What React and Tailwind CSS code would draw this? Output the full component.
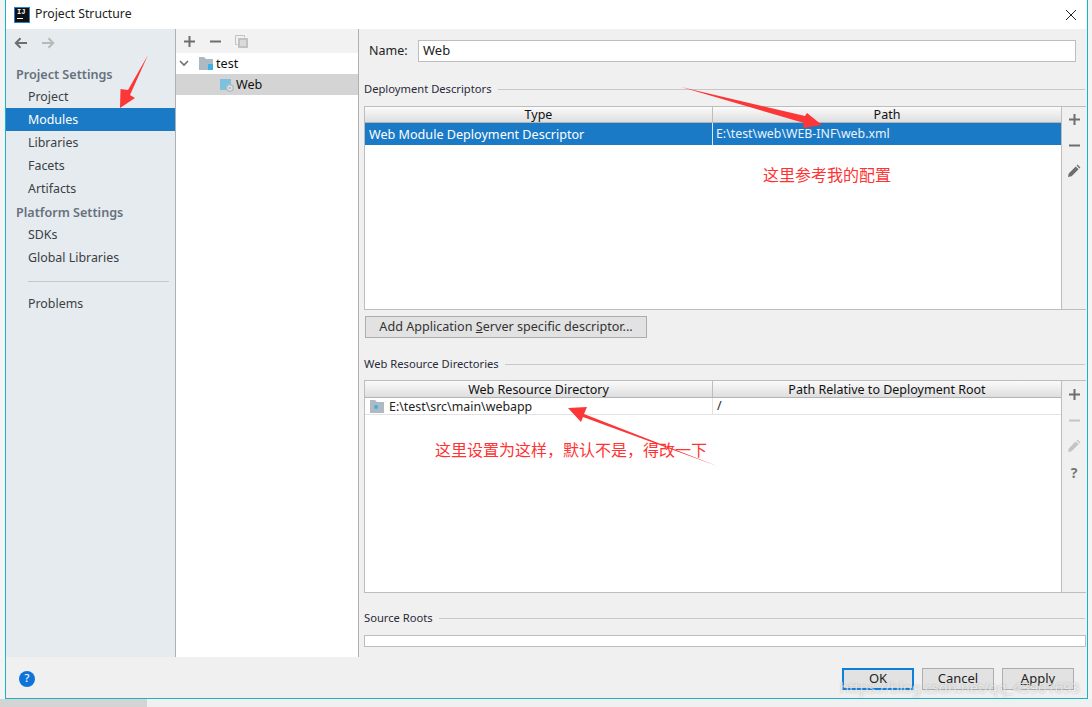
import React from "react";

const font = { fontFamily: '"Noto Sans", "Noto Sans CJK SC", sans-serif' };

function Plus({ c = "#6e6e6e" }) {
  return (
    <svg width="13" height="13" viewBox="0 0 13 13"><path d="M1 6.5h11M6.5 1v11" stroke={c} strokeWidth="2" /></svg>
  );
}
function Minus({ c = "#6e6e6e" }) {
  return (
    <svg width="13" height="13" viewBox="0 0 13 13"><path d="M1 6.5h11" stroke={c} strokeWidth="2" /></svg>
  );
}
function Pencil({ c = "#6e6e6e" }) {
  return (
    <svg width="14" height="14" viewBox="0 0 14 14"><path d="M1 13l.7-3.6 7-7 2.9 2.9-7 7zM9.6 1.6l1-1 2.8 2.8-1 1z" fill={c} /></svg>
  );
}
function Folder({ w = 14, badge }) {
  return (
    <svg width={w} height="13" viewBox="0 0 14 13">
      <path d="M0 0h5l2 2h7v11H0z" fill="#aebac3" />
      {badge}
    </svg>
  );
}

function SideItem({ children, active }) {
  return (
    <div className={`h-[23px] pl-[22px] pt-[2px] flex items-center text-[12.4px] ${active ? "bg-[#1b7ac5] text-white" : "text-[#3a3f44]"}`}>
      {children}
    </div>
  );
}
function SideHead({ children }) {
  return <div className="h-[23px] pl-[10px] pt-[4px] flex items-center text-[12.6px] font-semibold text-[#66717c]">{children}</div>;
}
function Section({ children, className = "" }) {
  return (
    <div className={`h-4 flex items-center gap-[6px] text-[11.2px] text-[#2a2a3a] ${className}`}>
      <span className="whitespace-nowrap pt-[1px]">{children}</span>
      <div className="flex-1 h-px bg-[#c8c8c8] mr-[2px]" />
    </div>
  );
}
function HeaderCell({ children, className = "" }) {
  return (
    <div className={`h-full pt-[2px] flex items-center justify-center text-[12.5px] text-[#111] ${className}`}>{children}</div>
  );
}
function DialogButton({ children, primary }) {
  return (
    <div className={`w-[72px] h-[22px] flex items-center justify-center text-[13px] text-[#222] bg-[#e2e2e2] ${primary ? "border-2 border-[#0f7fdc]" : "border border-[#adadad]"}`}>
      {children}
    </div>
  );
}

export default function App() {
  return (
    <div className="relative w-[1092px] h-[707px] bg-[#f0f0f0] overflow-hidden" style={font}>
      <div className="flex">
        <div className="w-[5px] h-[699px] bg-[#f4f4f4] border-t-0" />
        <div className="w-[1083px] h-[699px] border-x border-b border-[#17b4c8] flex flex-col bg-[#f0f0f0]">
          {/* title bar */}
          <div className="h-[29px] bg-white flex items-center shrink-0">
            <div className="ml-[8px] w-[16px] h-[16px] bg-[#111] border border-[#2a7fd0] flex flex-col items-start pl-[2px] leading-none">
              <span className="text-[7px] text-white font-bold leading-[8px]" style={{ fontFamily: '"Liberation Mono", monospace' }}>IJ</span>
              <span className="w-[6px] h-px bg-white mt-[2px]" />
            </div>
            <span className="ml-[5px] text-[12.25px] text-[#222]">Project Structure</span>
            <svg className="ml-auto mr-[10px]" width="12" height="12" viewBox="0 0 12 12"><path d="M1 1l10 10M11 1L1 11" stroke="#222" strokeWidth="1" /></svg>
          </div>

          <div className="flex-1 flex min-h-0">
            {/* sidebar */}
            <div className="w-[170px] bg-[#e6ebf0] border-r border-[#b0b0b0] shrink-0">
              <div className="h-[28px] flex items-center gap-[13px] pl-[8px]">
                <svg width="14" height="12" viewBox="0 0 14 12"><path d="M13 6H2M6.5 1.2L1.8 6l4.7 4.8" stroke="#6e6e6e" strokeWidth="2" fill="none" /></svg>
                <svg width="14" height="12" viewBox="0 0 14 12"><path d="M1 6h11M7.5 1.2L12.2 6l-4.7 4.8" stroke="#b9b9b9" strokeWidth="2" fill="none" /></svg>
              </div>
              <div className="h-[5px]" />
              <SideHead>Project Settings</SideHead>
              <SideItem>Project</SideItem>
              <SideItem active>Modules</SideItem>
              <SideItem>Libraries</SideItem>
              <SideItem>Facets</SideItem>
              <SideItem>Artifacts</SideItem>
              <SideHead>Platform Settings</SideHead>
              <SideItem>SDKs</SideItem>
              <SideItem>Global Libraries</SideItem>
              <div className="mt-[12px] mb-[10px] ml-[22px] mr-[6px] h-px bg-[#c4c8cc]" />
              <SideItem>Problems</SideItem>
            </div>

            {/* tree */}
            <div className="w-[183px] bg-white border-r border-[#b0b0b0] shrink-0">
              <div className="h-[24px] bg-[#f2f2f2] flex items-center pl-[7px] gap-[13px]">
                <Plus />
                <Minus />
                <svg width="13" height="13" viewBox="0 0 13 13"><path d="M0.5 0.5h9v2M0.5 0.5v9h2" fill="none" stroke="#c2c2c2" /><rect x="3" y="3" width="10" height="10" fill="#c2c2c2" /><path d="M5 6h6M5 8h6M5 10h6" stroke="#f2f2f2" /></svg>
              </div>
              <div className="h-[21px] flex items-center text-[12.6px] text-[#111]">
                <svg className="ml-[3px]" width="10" height="7" viewBox="0 0 10 7"><path d="M1 1l4 4 4-4" stroke="#6e6e6e" strokeWidth="1.6" fill="none" /></svg>
                <span className="ml-[10px] flex">
                  <Folder badge={<rect x="9" y="7" width="6" height="6" fill="#3fb0e0" />} />
                </span>
                <span className="ml-[3px] pt-[2px]">test</span>
              </div>
              <div className="h-[21px] bg-[#d4d4d4] flex items-center text-[12.6px] text-[#111] pl-[44px]">
                <svg width="14" height="14" viewBox="0 0 14 14">
                  <rect x="0" y="1" width="11" height="11" fill="#7cc1de" />
                  <circle cx="10" cy="10" r="4" fill="#b6bfc5" />
                  <circle cx="10" cy="10" r="2" fill="none" stroke="#eef2f4" />
                </svg>
                <span className="ml-[2px] pt-[2px]">Web</span>
              </div>
            </div>

            {/* detail */}
            <div className="flex-1 min-w-0 pl-[5px] flex flex-col">
              <div className="mt-[11px] h-[22px] flex items-center">
                <span className="ml-[5px] w-[49px] text-[12.5px] text-[#222]">Name:</span>
                <div className="w-[658px] h-[22px] bg-white border border-[#bdbdbd] flex items-center pl-[4px] text-[13px] text-[#222]">Web</div>
              </div>

              <Section className="mt-[19px]">Deployment Descriptors</Section>

              <div className="mt-[9px] h-[204px] w-[722px] border border-[#bdbdbd] border-r-0 flex">
                <div className="w-[696px] bg-white flex flex-col">
                  <div className="h-[16px] bg-linear-to-b from-[#fbfbfb] to-[#dedede] border-b border-[#b4b4b4] flex">
                    <HeaderCell className="w-[348px] border-r border-[#bdbdbd]">Type</HeaderCell>
                    <HeaderCell className="flex-1">Path</HeaderCell>
                  </div>
                  <div className="h-[22px] bg-[#1b7ac5] text-white text-[12.6px] flex items-center">
                    <div className="w-[348px] pl-[4px] pt-[2px] h-full flex items-center border-r border-[#dbe7f2]">Web Module Deployment Descriptor</div>
                    <div className="pl-[3px] text-[12.35px] text-[#eaf3fb]">E:\test\web\WEB-INF\web.xml</div>
                  </div>
                </div>
                <div className="flex-1 border-l border-[#bdbdbd] flex flex-col items-center pt-[6px] gap-[12.5px]">
                  <Plus />
                  <Minus />
                  <Pencil />
                </div>
              </div>

              <div className="mt-[6px] ml-[1px] w-[282px] h-[22px] bg-[#e2e2e2] border border-[#adadad] flex items-center justify-center text-[12.6px] text-[#333]">
                <span>Add Application <u>S</u>erver specific descriptor...</span>
              </div>

              <Section className="mt-[18px]">Web Resource Directories</Section>

              <div className="mt-[8px] h-[213px] w-[722px] border border-[#bdbdbd] border-r-0 flex">
                <div className="w-[696px] bg-white flex flex-col">
                  <div className="h-[17px] bg-linear-to-b from-[#fbfbfb] to-[#dedede] border-b border-[#b4b4b4] flex">
                    <HeaderCell className="w-[348px] border-r border-[#bdbdbd]">Web Resource Directory</HeaderCell>
                    <HeaderCell className="flex-1">Path Relative to Deployment Root</HeaderCell>
                  </div>
                  <div className="h-[17px] border-b border-[#e2e2e2] text-[12.4px] text-[#222] flex items-center">
                    <div className="w-[348px] pl-[5px] h-full flex items-center gap-[5px] border-r border-[#e2e2e2]">
                      <Folder w={14} badge={<circle cx="6" cy="7" r="2" fill="#3fb0e0" />} />
                      <span className="pt-[2px]">E:\test\src\main\webapp</span>
                    </div>
                    <div className="pl-[4px]">/</div>
                  </div>
                </div>
                <div className="flex-1 border-l border-[#bdbdbd] flex flex-col items-center pt-[7px] gap-[12.5px]">
                  <Plus />
                  <Minus c="#c4c4c4" />
                  <Pencil c="#c4c4c4" />
                  <span className="h-[13px] flex items-center text-[14px] font-bold text-[#777]">?</span>
                </div>
              </div>

              <Section className="mt-[17px]">Source Roots</Section>
              <div className="mt-[9px] h-[12px] w-[722px] bg-white border border-[#bdbdbd]" />
            </div>
          </div>

          {/* bottom bar */}
          <div className="h-[41px] shrink-0 flex items-center pr-[13px] bg-[#f0f0f0]">
            <div className="ml-[13px] mt-[2px] w-[16px] h-[16px] rounded-full bg-[#0f74d8] flex items-center justify-center text-white text-[11px] font-medium">?</div>
            <div className="ml-auto mt-[2px] flex gap-[8px]">
              <DialogButton primary>OK</DialogButton>
              <DialogButton>Cancel</DialogButton>
              <DialogButton><span><u>A</u>pply</span></DialogButton>
            </div>
          </div>
        </div>
        <div className="w-[4px] h-[699px] bg-[#f4f4f4]" />
      </div>
      <div className="flex h-[8px]">
        <div className="w-[147px] bg-[#d4d4d4]" />
        <div className="flex-1 bg-[#f0f0f0]" />
      </div>

      {/* annotations */}
      <svg className="absolute inset-0 pointer-events-none" width="1092" height="707" viewBox="0 0 1092 707">
        <polygon points="148,55 128,90 120.5,89 120,108 135,98 130,95" fill="#fb3737" />
        <polygon points="681,87 805,116 807,113 822,125 803,128 804,123" fill="#fb3737" />
        <polygon points="717,466 584,414 587,407 568,408 581,422 583,417" fill="#fb3737" />
      </svg>
      <div className="absolute left-[763px] top-[163px] text-[16px] leading-[22px] text-[#f33] whitespace-nowrap" style={{ fontFamily: '"Noto Sans CJK SC", sans-serif' }}>这里参考我的配置</div>
      <div className="absolute left-[435px] top-[438px] text-[16px] leading-[22px] text-[#f33] whitespace-nowrap" style={{ fontFamily: '"Noto Sans CJK SC", sans-serif' }}>{"这里设置为这样\uFF0C默认不是\uFF0C得改一下"}</div>
      <div className="absolute left-[840px] top-[678px] text-[14.6px] leading-[18px] text-white/60 whitespace-nowrap [text-shadow:0_0_2px_rgba(120,120,120,0.5)]">https://blog.csdn.net/qq_43901693</div>
    </div>
  );
}
